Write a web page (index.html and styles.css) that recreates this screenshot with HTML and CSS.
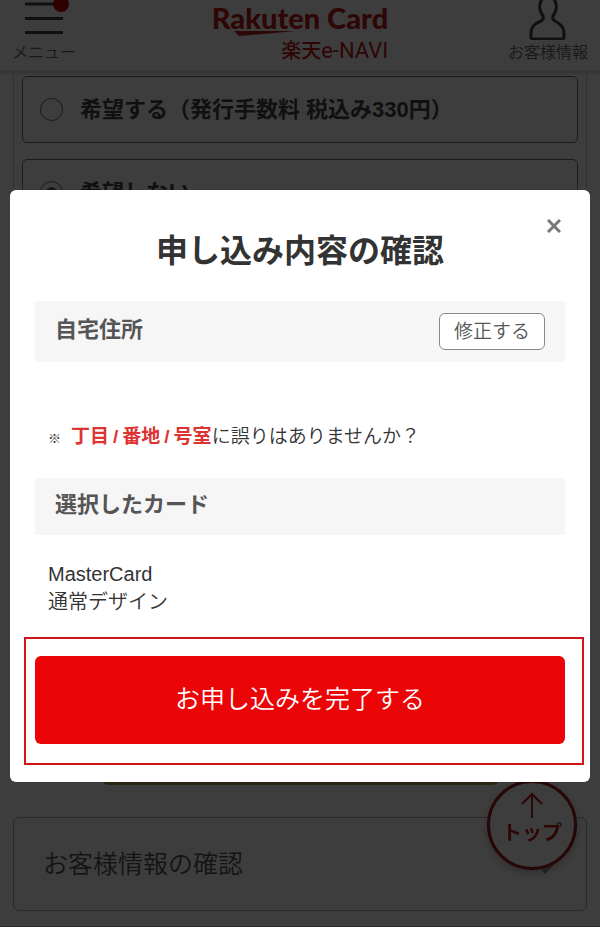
FILE: index.html
```html
<!DOCTYPE html>
<html lang="ja">
<head>
  <meta charset="UTF-8">
  <meta name="viewport" content="width=device-width, initial-scale=1.0">
  <title>楽天e-NAVI</title>
  <link rel="stylesheet" href="styles.css">
</head>
<body>
  <header class="header">
    <button type="button" class="header-item">
      <svg width="54" height="40" viewBox="0 0 54 40">
        <path d="M8 4H46M8 18.500H46M8 32.500H46" stroke="#444" stroke-width="3"/>
        <circle cx="44" cy="4" r="8" fill="#bf0000"/>
      </svg>
      <span>メニュー</span>
    </button>

    <a class="logo" href="#">
      <span class="logo-name">Rakuten Card</span>
      <svg class="logo-line" width="62" height="6" viewBox="0 0 62 6">
        <path d="M0 0H62L5 5Z" fill="#bf1a1a"/>
      </svg>
      <span class="logo-sub">楽天<span class="logo-navi">e-NAVI</span></span>
    </a>

    <a class="header-item" href="#">
      <svg width="46" height="40" viewBox="0 0 46 40">
        <path d="M18 16C15 12 14 8 15 4C16 -5 30 -5 31 4C32 8 31 12 28 16C27 19 28 20 30 21C36 24 39 27 39 33V37Q39 39 37 39H8Q6 39 6 37V33C6 27 9 24 16 21C18 20 19 19 18 16Z" fill="none" stroke="#444" stroke-width="3"/>
      </svg>
      <span>お客様情報</span>
    </a>
  </header>

  <main>
    <form class="options">
      <label class="option" for="wish-yes">
        <input type="radio" id="wish-yes" name="wish">
        <span>希望する（発行手数料 税込み330円）</span>
      </label>
      <label class="option" for="wish-no">
        <input type="radio" id="wish-no" name="wish" checked>
        <span>希望しない</span>
      </label>
    </form>

    <div class="next-bar"></div>

    <a class="customer" href="#">
      <span>お客様情報の確認</span>
      <svg width="18" height="22" viewBox="0 0 18 22">
        <path d="M2 11L9 18L16 11" fill="none" stroke="#555" stroke-width="4"/>
      </svg>
    </a>
  </main>
  <footer class="footer"></footer>

  <a class="to-top" href="#">
    <svg width="24" height="26" viewBox="0 0 24 26">
      <path d="M12 26V2M2 12L12 2L22 12" fill="none" stroke="#bf1a1a" stroke-width="2"/>
    </svg>
    トップ
  </a>

  <div class="overlay">
    <div class="modal" role="dialog" aria-labelledby="modal-title">
      <button type="button" class="close" aria-label="閉じる">
        <svg width="14" height="14" viewBox="0 0 14 14">
          <path d="M1 1L13 13M13 1L1 13" stroke="#777" stroke-width="3"/>
        </svg>
      </button>
      <h1 id="modal-title">申し込み内容の確認</h1>

      <div class="bar">
        <h2>自宅住所</h2>
        <button type="button" class="edit">修正する</button>
      </div>
      <p class="note"><span class="mark">※</span><strong>丁目<i>/</i>番地<i>/</i>号室</strong>に誤りはありませんか？</p>

      <div class="bar">
        <h2>選択したカード</h2>
      </div>
      <p class="card-info">MasterCard<br>通常デザイン</p>

      <div class="submit-frame">
        <button type="submit" class="submit">お申し込みを完了する</button>
      </div>
    </div>
  </div>
</body>
</html>
```

FILE: styles.css
```css
* {
  box-sizing: border-box;
}

body {
  margin: 0;
  background: #fff;
  color: #555;
  font-family: "Liberation Sans", "Noto Sans CJK JP", sans-serif;
  overflow: hidden;
}

button {
  font-family: inherit;
  cursor: pointer;
}

a {
  color: inherit;
  text-decoration: none;
}

/* header */
.header {
  display: grid;
  grid-template-columns: 1fr auto 1fr;
  align-items: start;
  height: 72px;
  padding: 0 12px;
  border-bottom: 2px solid #ddd;
  box-shadow: 0 1px 3px #ccc;
}

.header-item {
  display: flex;
  flex-direction: column;
  align-items: center;
  justify-self: start;
  min-width: 64px;
  padding: 0;
  border: none;
  background: none;
  color: #666;
  font-size: 16px;
  font-weight: 350;
  line-height: 25px;
}

.header-item:last-child {
  justify-self: end;
}

.logo {
  display: flex;
  flex-direction: column;
  align-items: flex-end;
  color: #bf1a1a;
}

.logo-name {
  font-family: Lato, sans-serif;
  font-size: 29px;
  font-weight: 900;
  line-height: 35px;
}

.logo-line {
  align-self: flex-start;
  margin: -4px 0 0 22px;
}

.logo-sub {
  display: flex;
  align-items: center;
  font-size: 20px;
  font-weight: 500;
  line-height: 28px;
}

.logo-navi {
  font-family: Roboto, sans-serif;
  font-size: 22px;
  font-weight: 400;
}

/* options */
.options {
  display: flex;
  flex-direction: column;
  gap: 16px;
  margin: 0 13px;
  padding: 4px 8px 24px;
  border: solid #ccc;
  border-width: 0 1px 1px;
}

.option {
  display: flex;
  align-items: center;
  height: 67px;
  padding: 0 17px;
  border: 1px solid #777;
  border-radius: 5px;
  color: #444;
  font-size: 22px;
  font-weight: bold;
}

.option span,
.customer span {
  padding-bottom: 5px;
}

.option input {
  appearance: none;
  width: 23px;
  height: 23px;
  margin: 0 17px 0 0;
  border: 1px solid #666;
  border-radius: 50%;
}

.option input:checked {
  background: radial-gradient(circle, #667 5px, transparent 6px);
}

.next-bar {
  width: 397px;
  max-width: 70%;
  height: 88px;
  margin: 446px auto 32px;
  border-radius: 6px;
  background: #b5a050;
}

.customer {
  display: flex;
  align-items: center;
  justify-content: space-between;
  height: 94px;
  margin: 0 13px 15px;
  padding: 0 32px 0 29px;
  border: 1px solid #aaa;
  border-radius: 6px;
  color: #555;
  font-size: 25px;
  font-weight: 350;
}

.footer {
  height: 20px;
  border-top: 2px solid #aaa;
}

.to-top {
  position: fixed;
  right: 23px;
  bottom: 57px;
  display: flex;
  flex-direction: column;
  align-items: center;
  width: 90px;
  height: 90px;
  padding-top: 9px;
  border: 3px solid #a01a1a;
  border-radius: 50%;
  background: #fff;
  box-shadow: 0 3px 8px #bbb;
  color: #bf1a1a;
  font-size: 20px;
  font-weight: bold;
  line-height: 30px;
}

/* modal */
.overlay {
  position: fixed;
  inset: 0;
  padding: 190px 10px 0;
  background: rgba(0, 0, 0, 0.76);
}

.modal {
  position: relative;
  padding: 37px 25px 17px;
  border-radius: 6px;
  background: #fff;
  color: #333;
}

.close {
  position: absolute;
  top: 24px;
  right: 24px;
  padding: 5px;
  border: none;
  background: none;
  line-height: 0;
}

.modal h1 {
  margin: 0 0 26px;
  font-size: 32px;
  line-height: 48px;
  text-align: center;
}

.bar {
  display: flex;
  justify-content: space-between;
  align-items: center;
  min-height: 57px;
  padding: 12px 20px;
  background: #f6f6f6;
}

.bar h2 {
  margin: 0;
  color: #555;
  font-size: 22px;
  line-height: 30px;
  padding-bottom: 3px;
}

.edit {
  height: 37px;
  padding: 0 14px;
  border: 1px solid #888;
  border-radius: 6px;
  background: #fff;
  color: #555;
  font-size: 19px;
  font-weight: 350;
  line-height: 28px;
}

.note {
  margin: 61px 13px 25px;
  font-size: 19px;
  font-weight: 350;
  line-height: 28px;
}

.mark {
  margin-right: 10px;
  font-size: 13px;
  font-weight: bold;
}

.note strong {
  color: #d33;
  font-weight: bold;
}

.note i {
  margin: 0 4px;
  font-style: normal;
}

.card-info {
  margin: 25px 13px 21px;
  font-size: 20px;
  font-weight: 350;
  line-height: 28px;
}

.submit-frame {
  margin: 0 -19px 0 -11px;
  padding: 17px 17px 19px 9px;
  border: 2px solid #d0161b;
}

.submit {
  width: 100%;
  height: 88px;
  padding-bottom: 8px;
  border: none;
  border-radius: 6px;
  background: #eb0507;
  color: #fff;
  font-size: 25px;
  font-weight: 350;
}
```
